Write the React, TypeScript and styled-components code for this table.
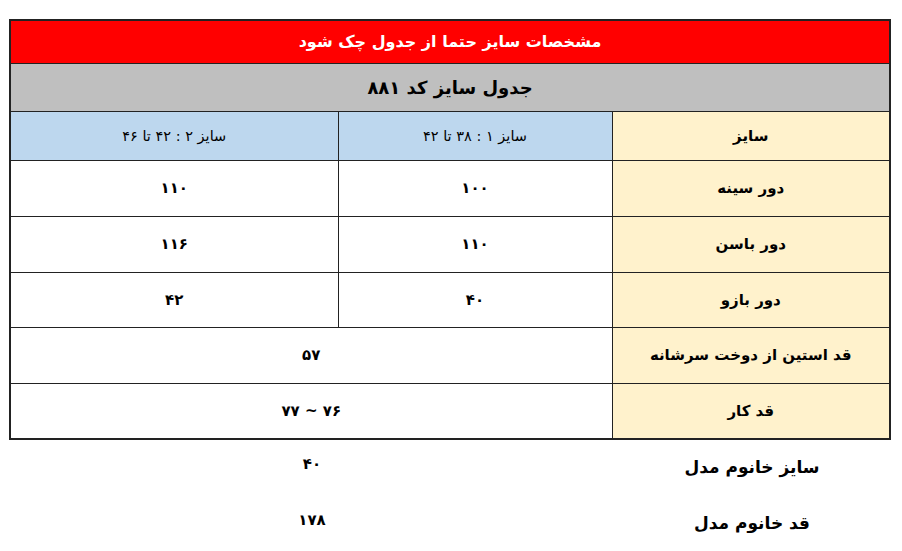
import React from "react";
import styled, { createGlobalStyle } from "styled-components";

const Global = createGlobalStyle`
  html, body { margin: 0; padding: 0; background: #fff; }
  body { font-family: "DejaVu Sans", "Noto Sans", sans-serif; color: #000; }
`;

const Page = styled.div`
  padding: 19px 11px 0 11px;
  width: 880px;
  direction: rtl;
`;

const Table = styled.table`
  width: 880px;
  border-collapse: collapse;
  table-layout: fixed;
  border: 2px solid #222;
`;

const Cell = styled.td<{ $bg?: string; $h: number; $size: number; $bold?: boolean; $color?: string }>`
  height: ${(p) => p.$h}px;
  padding: 0;
  border: 1px solid #222;
  background: ${(p) => p.$bg || "#fff"};
  color: ${(p) => p.$color || "#000"};
  font-size: ${(p) => p.$size}px;
  font-weight: ${(p) => (p.$bold ? 700 : 400)};
  text-align: center;
  vertical-align: middle;
  box-sizing: border-box;
`;

const Extra = styled.div`
  display: grid;
  grid-template-columns: 278px 602px;
  grid-auto-rows: 56px;
`;

const ExtraLabel = styled.div`
  display: flex;
  align-items: center;
  justify-content: center;
  font-size: 17px;
  font-weight: 700;
  padding-bottom: 2px;
`;

const ExtraValue = styled.div`
  display: flex;
  align-items: center;
  justify-content: center;
  font-size: 15px;
  font-weight: 700;
  padding-bottom: 8px;
`;

const RED = "#ff0000";
const GRAY = "#bfbfbf";
const BLUE = "#bdd7ee";
const YELLOW = "#fff2cc";

const rows: [string, string, string, number][] = [
  ["دور سینه", "۱۰۰", "۱۱۰", 56],
  ["دور باسن", "۱۱۰", "۱۱۶", 56],
  ["دور بازو", "۴۰", "۴۲", 55],
];

export default function App() {
  return (
    <>
      <Global />
      <Page>
        <Table>
          <colgroup>
            <col style={{ width: 278 }} />
            <col style={{ width: 274 }} />
            <col style={{ width: 328 }} />
          </colgroup>
          <tbody>
            <tr>
              <Cell colSpan={3} $bg={RED} $h={43} $size={16} $bold $color="#fff">
                مشخصات سایز حتما از جدول چک شود
              </Cell>
            </tr>
            <tr>
              <Cell colSpan={3} $bg={GRAY} $h={48} $size={18} $bold>
                جدول سایز کد ۸۸۱
              </Cell>
            </tr>
            <tr>
              <Cell $bg={YELLOW} $h={49} $size={15} $bold>سایز</Cell>
              <Cell $bg={BLUE} $h={49} $size={14.5}>سایز ۱ : ۳۸ تا ۴۲</Cell>
              <Cell $bg={BLUE} $h={49} $size={14.5}>سایز ۲ : ۴۲ تا ۴۶</Cell>
            </tr>
            {rows.map(([l, a, b, h]) => (
              <tr key={l}>
                <Cell $bg={YELLOW} $h={h} $size={15} $bold>{l}</Cell>
                <Cell $h={h} $size={15} $bold>{a}</Cell>
                <Cell $h={h} $size={15} $bold>{b}</Cell>
              </tr>
            ))}
            <tr>
              <Cell $bg={YELLOW} $h={56} $size={15} $bold>قد استین از دوخت سرشانه</Cell>
              <Cell colSpan={2} $h={56} $size={15} $bold>۵۷</Cell>
            </tr>
            <tr>
              <Cell $bg={YELLOW} $h={56} $size={15} $bold>قد کار</Cell>
              <Cell colSpan={2} $h={56} $size={15} $bold>۷۶ ~ ۷۷</Cell>
            </tr>
          </tbody>
        </Table>
        <Extra>
          <ExtraLabel>سایز خانوم مدل</ExtraLabel>
          <ExtraValue>۴۰</ExtraValue>
          <ExtraLabel>قد خانوم مدل</ExtraLabel>
          <ExtraValue>۱۷۸</ExtraValue>
        </Extra>
      </Page>
    </>
  );
}
